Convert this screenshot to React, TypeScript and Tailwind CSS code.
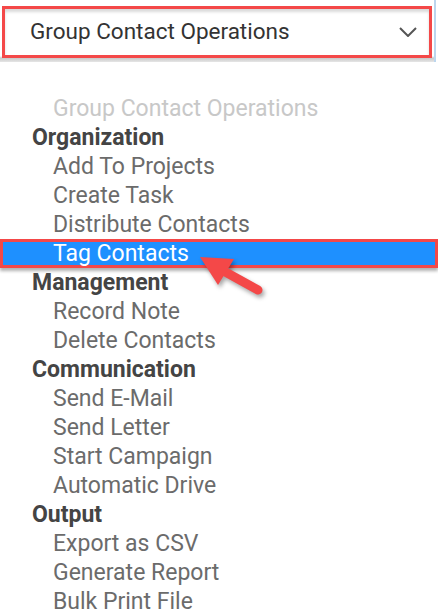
const groups: { title: string; items: string[] }[] = [
  { title: 'Organization', items: ['Add To Projects', 'Create Task', 'Distribute Contacts', 'Tag Contacts'] },
  { title: 'Management', items: ['Record Note', 'Delete Contacts'] },
  { title: 'Communication', items: ['Send E-Mail', 'Send Letter', 'Start Campaign', 'Automatic Drive'] },
  { title: 'Output', items: ['Export as CSV', 'Generate Report', 'Bulk Print File'] },
]

const selected = 'Tag Contacts'

function Arrow() {
  return (
    <svg
      className="absolute left-[190px] top-[248px] drop-shadow-[2px_3px_2px_rgba(0,0,0,0.35)]"
      width="80"
      height="55"
      viewBox="0 0 80 55"
    >
      <line x1="30" y1="21" x2="68" y2="42" stroke="#f44848" strokeWidth="9" strokeLinecap="round" />
      <polygon points="10,9 44,11 28,37" fill="#f44848" />
    </svg>
  )
}

export default function App() {
  return (
    <div className="relative h-[615px] w-[438px] overflow-hidden bg-white font-['Roboto',sans-serif]">
      {/* Select */}
      <div className="h-[62px] w-[436px] border-r-2 border-[#bcd6ee] bg-[linear-gradient(to_bottom,#ffffff_0,#ffffff_56px,#c8c8c8_58px,#e6e6e6_62px)] pl-[2px] pt-[6px]">
        <div className="flex h-[52px] w-[430px] items-center justify-between border-[3px] border-[#f44848] bg-white pl-[25px] pr-[12px] shadow-[inset_0_3px_3px_rgba(0,0,0,0.15)]">
          <span className="text-[22.5px] text-[#333]">Group Contact Operations</span>
          <svg width="18" height="10" viewBox="0 0 18 10" fill="none" stroke="#555" strokeWidth="2">
            <path d="M1 1l8 8 8-8" />
          </svg>
        </div>
      </div>

      {/* Options */}
      <div className="pt-[32px] text-[23px]">
        <div className="h-[29px] pl-[53px] leading-[29px] text-[#c8c8c8]">Group Contact Operations</div>
        {groups.map((g) => (
          <div key={g.title}>
            <div className="h-[29px] pl-[32px] font-bold leading-[29px] text-[#444]">{g.title}</div>
            {g.items.map((item) =>
              item === selected ? (
                <div
                  key={item}
                  className="h-[29px] border-[3px] border-[#f44848] bg-[#1e90ff] pl-[50px] leading-[23px] text-white shadow-[0_3px_3px_rgba(0,0,0,0.3)]"
                >
                  {item}
                </div>
              ) : (
                <div key={item} className="h-[29px] pl-[53px] leading-[29px] text-[#6b6b6b]">
                  {item}
                </div>
              ),
            )}
          </div>
        ))}
      </div>

      <Arrow />
    </div>
  )
}
